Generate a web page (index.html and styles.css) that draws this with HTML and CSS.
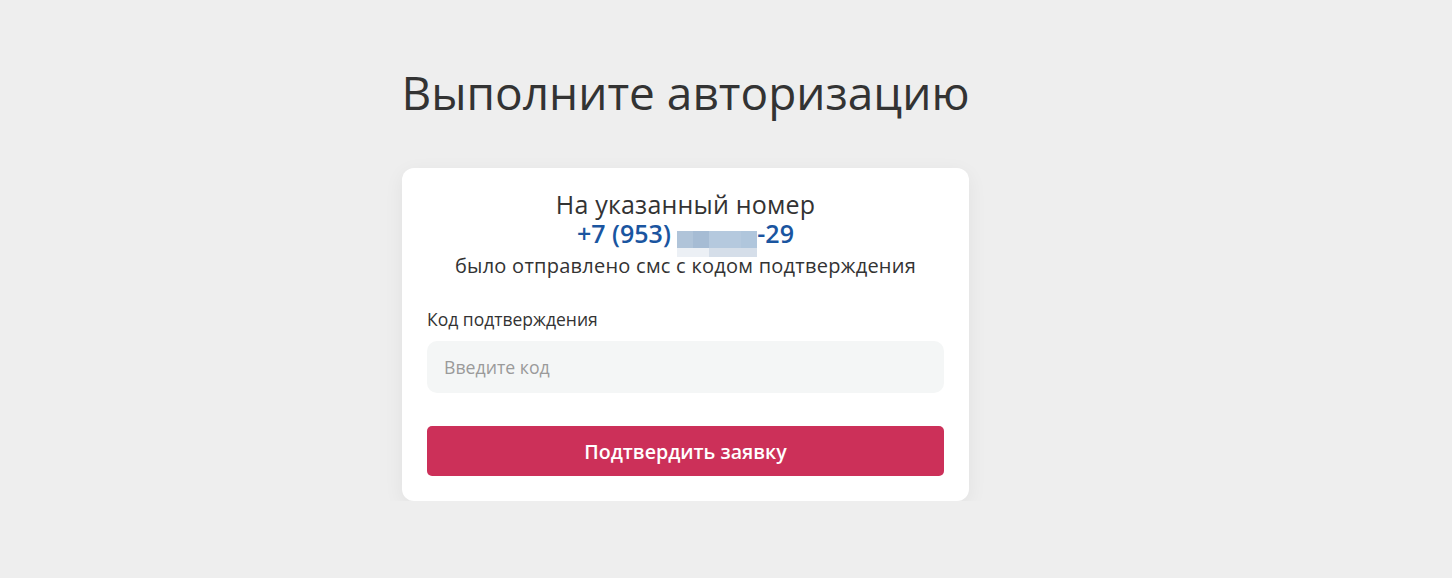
FILE: index.html
```html
<!DOCTYPE html>
<html lang="ru">
<head>
<meta charset="utf-8">
<title>Выполните авторизацию</title>
<link rel="stylesheet" href="styles.css">
</head>
<body>
<main class="page">
  <h1 class="title">Выполните авторизацию</h1>
  <section class="card">
    <div class="info">
      <p class="info-line">На указанный номер</p>
      <p class="phone">+7 (953) <span class="blur"><span class="b b1"></span><span class="b b2"></span><span class="b b3"></span><span class="b b4"></span><span class="b b5"></span><span class="b b6"></span></span>-29</p>
      <p class="info-sub">было отправлено смс с кодом подтверждения</p>
    </div>
    <label class="label" for="code">Код подтверждения</label>
    <input class="input" id="code" type="text" placeholder="Введите код">
    <button class="btn" type="button">Подтвердить заявку</button>
  </section>
</main>
</body>
</html>
```
FILE: styles.css
```css
html, body {
  margin: 0;
  padding: 0;
  background: #eeeeee;
}
body {
  font-family: "Open Sans", "Noto Sans", sans-serif;
  color: #333333;
}
.page {
  width: 567px;
  margin-left: 402px;
  display: flex;
  flex-direction: column;
  align-items: center;
  padding-top: 64px;
}
.title {
  margin: 0;
  font-size: 46px;
  font-weight: 400;
  line-height: 56px;
  color: #333333;
  white-space: nowrap;
}
.card {
  margin-top: 48px;
  width: 567px;
  box-sizing: border-box;
  background: #ffffff;
  border-radius: 12px;
  box-shadow: 0 5px 20px rgba(0, 0, 0, 0.06);
  padding: 21px 25px 25px;
  display: flex;
  flex-direction: column;
}
.info {
  text-align: center;
  margin-bottom: 28px;
}
.info p {
  margin: 0;
}
.info-line {
  font-size: 25px;
  line-height: 30px;
  color: #333333;
  letter-spacing: 0.2px;
}
.phone {
  font-size: 25px;
  line-height: 28px;
  font-weight: 600;
  color: #1a55a0;
}
.blur {
  display: inline-grid;
  grid-template-columns: 16px 16px 32px 16px;
  grid-template-rows: 17px 9px;
  width: 80px;
  height: 26px;
  vertical-align: -5px;
  margin: -4px 0;
}
.b1 { background: #b0c4d9; }
.b2 { background: #a6bcd4; }
.b3 { background: #b5c9de; }
.b4 { background: #b0c6dc; }
.b5 { grid-column: 1 / span 2; background: #ecf0f5; }
.b6 { grid-column: 3 / span 2; background: #d5dee9; }
.info-sub {
  font-size: 20px;
  line-height: 26px;
  color: #333333;
  letter-spacing: 0.25px;
}
.label {
  font-size: 17.5px;
  line-height: 24px;
  color: #333333;
  margin-bottom: 10px;
}
.input {
  height: 52px;
  box-sizing: border-box;
  border: none;
  border-radius: 10px;
  background: #f4f6f6;
  padding: 0 17px;
  font-family: inherit;
  font-size: 17.7px;
  color: #333333;
  outline: none;
}
.input::placeholder {
  color: #9a9a9a;
}
.btn {
  margin-top: 33px;
  height: 50px;
  border: none;
  border-radius: 5px;
  background: #cc3059;
  color: #ffffff;
  font-family: inherit;
  font-size: 19.6px;
  font-weight: 600;
  cursor: pointer;
}
```
